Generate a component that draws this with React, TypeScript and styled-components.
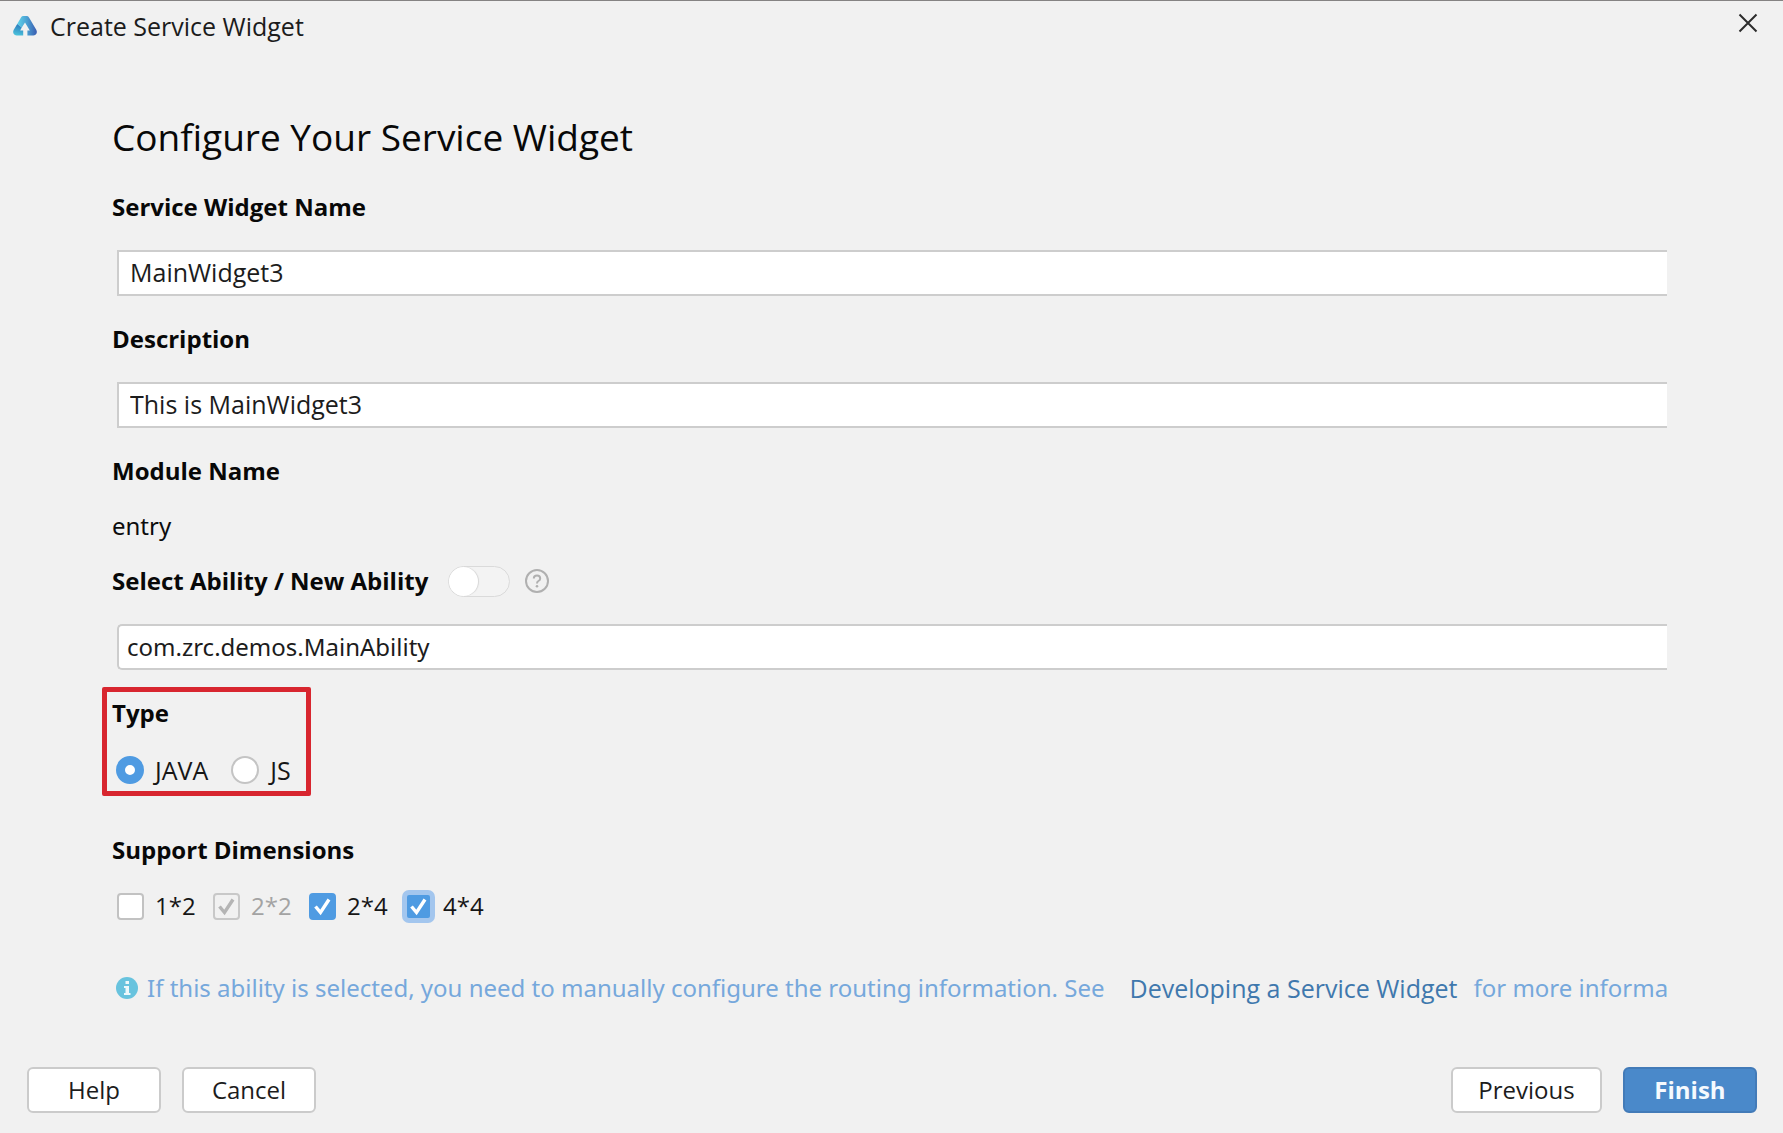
import React, { useState } from "react";
import styled, { createGlobalStyle, css } from "styled-components";

const headingFont = `"Open Sans", "Noto Sans", sans-serif`;
const textFont = `"Noto Sans", "Open Sans", sans-serif`;

const GlobalStyle = createGlobalStyle`
  *, *::before, *::after { box-sizing: border-box; }
  body {
    margin: 0;
    background: #f1f1f1;
    color: #0c0c0c;
    font: 24px/32px ${textFont};
  }
`;

const Dialog = styled.div`
  display: flex;
  flex-direction: column;
  min-height: 100vh;
  border-top: 1px solid #858383;
  overflow: hidden;
`;

const TitleBar = styled.header`
  display: flex;
  align-items: center;
  justify-content: space-between;
  height: 50px;
  padding: 0 24px 0 12px;
`;

const Title = styled.div`
  display: flex;
  align-items: center;
  gap: 12px;
  color: #1c1c1c;
  font: 25px/32px ${headingFont};
`;

const CloseButton = styled.button`
  display: flex;
  padding: 0 0 7px;
  border: 0;
  background: none;
`;

const Form = styled.form`
  display: flex;
  flex: 1;
  flex-direction: column;
  padding: 62px 116px 0 112px;
`;

const Heading = styled.h1`
  margin: 0 0 30px;
  font: 400 37px/48px ${headingFont};
  color: #080808;
`;

const Field = styled.div`
  display: flex;
  flex-direction: column;
  gap: 27px;
  margin-bottom: 27px;
`;

const labelText = css`
  font: 700 24px/32px ${headingFont};
  color: #080808;
`;

const Label = styled.label`
  ${labelText}
`;

const Caption = styled.div`
  ${labelText}
`;

const TextInput = styled.input<{ $rounded?: boolean }>`
  height: 46px;
  margin-left: 5px;
  padding: 0 ${(p) => (p.$rounded ? 8 : 11)}px 2px;
  border: 2px solid #cdcdcd;
  border-right: 0;
  border-radius: ${(p) => (p.$rounded ? "5px 0 0 5px" : "0")};
  background: #fff;
  color: #1c1c1c;
  font: ${(p) => (p.$rounded ? `24px/32px ${textFont}` : `25px/32px ${headingFont}`)};
  outline: none;
`;

const ModuleField = styled.div`
  display: flex;
  flex-direction: column;
  gap: 23px;
  margin-bottom: 23px;
`;

const AbilityRow = styled.div`
  display: flex;
  align-items: center;
`;

const Switch = styled.input`
  appearance: none;
  display: flex;
  width: 62px;
  height: 31px;
  margin: 0 15px 0 20px;
  border: 1px solid #dadada;
  border-radius: 16px;
  background: #f3f3f3;

  &::before {
    content: "";
    width: 29px;
    height: 29px;
    border-radius: 50%;
    background: #fff;
    box-shadow: 1px 0 1px #d6d6d6;
  }
  &:checked { justify-content: flex-end; background: #4e9ade; }
`;

const TypeGroup = styled.div`
  position: relative;
  display: flex;
  flex-direction: column;
  align-self: flex-start;
  gap: 25px;
  margin-bottom: 48px;
`;

const Highlight = styled.div`
  position: absolute;
  inset: -10px -20px -10px -10px;
  border: 5px solid #d8262f;
  border-radius: 2px;
  pointer-events: none;
`;

const RadioRow = styled.div`
  display: flex;
  gap: 23px;
  padding-left: 4px;
  font-size: 25px;
`;

const Choice = styled.label<{ $muted?: boolean }>`
  display: flex;
  align-items: center;
  gap: 11px;
  color: ${(p) => (p.$muted ? "#a3a3a3" : "#161616")};
  font-family: ${headingFont};
`;

const Radio = styled.input`
  appearance: none;
  width: 28px;
  height: 28px;
  margin: 0;
  border: 2px solid #c4c4c4;
  border-radius: 50%;
  background: #fff;

  &:checked { border: 9px solid #4f9be2; }
`;

const DimensionGroup = styled.div`
  display: flex;
  flex-direction: column;
  gap: 24px;
  margin-bottom: 50px;
`;

const DimensionRow = styled.div`
  display: grid;
  grid-template-columns: repeat(4, 96px);
  padding-left: 5px;
`;

const BoxWrap = styled.span`
  display: grid;

  > * { grid-area: 1 / 1; }
  svg { pointer-events: none; }
`;

const Checkbox = styled.input<{ $ring?: boolean }>`
  appearance: none;
  width: 27px;
  height: 27px;
  margin: 0;
  border: 2px solid #c2c2c2;
  border-radius: 4px;
  background: #fff;

  &:checked { border-color: #4f9be2; background: #4f9be2; }
  &&:disabled { border-color: #c8c8c8; background: #f1f1f1; }
  ${(p) =>
    p.$ring &&
    css`
      &:checked { border-color: #a3c6ee; }
      box-shadow: 0 0 0 3px #a3c6ee;
    `}
`;

const Note = styled.p`
  display: flex;
  align-items: center;
  margin: 0 0 0 4px;
  white-space: nowrap;
  color: #76a8dc;

  svg { flex: none; margin-right: 9px; }
`;

const NoteLink = styled.a`
  margin: 0 16px 0 25px;
  color: #3f78ad;
  font: 25px/32px ${headingFont};
  text-decoration: none;
`;

const Footer = styled.footer`
  display: flex;
  gap: 21px;
  padding: 0 26px 20px 27px;
`;

const Spacer = styled.div`
  flex: 1;
`;

const Button = styled.button<{ $primary?: boolean; $wide?: boolean }>`
  width: ${(p) => (p.$wide ? 151 : 134)}px;
  height: 46px;
  padding: 0;
  border: 2px solid ${(p) => (p.$primary ? "#437bb8" : "#cbcbcb")};
  border-radius: 6px;
  background: ${(p) => (p.$primary ? "#4a89ca" : "#fff")};
  color: ${(p) => (p.$primary ? "#f6fafe" : "#1c1c1c")};
  font: ${(p) => (p.$primary ? 700 : 400)} 24px/32px ${headingFont};
`;

const Logo = () => (
  <svg width="26" height="22" viewBox="0 0 26 22" aria-hidden="true">
    <defs>
      <linearGradient id="logoTop" x1="0" y1="0" x2="1" y2="0">
        <stop offset="0" stopColor="#5fd3ea" />
        <stop offset="0.5" stopColor="#4a9fd2" />
        <stop offset="1" stopColor="#3a5cb0" />
      </linearGradient>
      <linearGradient id="logoLeft" x1="0.6" y1="0" x2="0.4" y2="1">
        <stop offset="0" stopColor="#2a78bc" />
        <stop offset="1" stopColor="#4cc4dc" />
      </linearGradient>
    </defs>
    <path d="M9 2.400Q9.800 1 11.400 1h3.200Q16.200 1 17 2.400L24.400 15Q25.400 17 24.400 18.800Q23.400 20.600 21.400 20.600H15.400V15.400H17.800L13 7.600L9.800 12.400L5.200 9Z" fill="url(#logoTop)" />
    <path d="M5.200 9L9.800 12.400L8.200 15.400H11.200V20.600H4.600Q2.600 20.600 1.600 18.800Q.6 17 1.600 15Z" fill="url(#logoLeft)" />
  </svg>
);

const Check = ({ color }: { color: string }) => (
  <svg width="27" height="27" viewBox="0 0 27 27" aria-hidden="true">
    <path d="M6.500 13.500l5 6L20 6.500" fill="none" stroke={color} strokeWidth="3.400" />
  </svg>
);

const dimensions = [
  { name: "1*2" },
  { name: "2*2", on: true, disabled: true },
  { name: "2*4", on: true },
  { name: "4*4", on: true, ring: true },
];

export default function App() {
  const [type, setType] = useState("JAVA");

  return (
    <Dialog>
      <GlobalStyle />
      <TitleBar>
        <Title>
          <Logo />
          Create Service Widget
        </Title>
        <CloseButton aria-label="Close">
          <svg width="22" height="22" viewBox="0 0 22 22" aria-hidden="true">
            <path d="M2.500 2.500l17 17M19.500 2.500l-17 17" stroke="#2c2c2c" strokeWidth="2" />
          </svg>
        </CloseButton>
      </TitleBar>

      <Form>
        <Heading>Configure Your Service Widget</Heading>

        <Field>
          <Label htmlFor="name">Service Widget Name</Label>
          <TextInput id="name" defaultValue="MainWidget3" />
        </Field>
        <Field>
          <Label htmlFor="description">Description</Label>
          <TextInput id="description" defaultValue="This is MainWidget3" />
        </Field>
        <ModuleField>
          <Caption>Module Name</Caption>
          <div>entry</div>
        </ModuleField>
        <Field>
          <AbilityRow>
            <Label htmlFor="ability">Select Ability / New Ability</Label>
            <Switch type="checkbox" role="switch" aria-label="New Ability" />
            <svg width="24" height="24" viewBox="0 0 24 24" fill="none" aria-hidden="true">
              <circle cx="12" cy="12" r="11" stroke="#b0b0b0" strokeWidth="2" />
              <path d="M8.800 9.600Q8.800 6.500 12 6.500T15.200 9.400Q15.200 11 13.400 12Q12 12.800 12 14.400" stroke="#b0b0b0" strokeWidth="2" />
              <circle cx="12" cy="17.200" r="1.300" fill="#b0b0b0" />
            </svg>
          </AbilityRow>
          <TextInput id="ability" $rounded defaultValue="com.zrc.demos.MainAbility" />
        </Field>

        <TypeGroup role="radiogroup" aria-labelledby="type-caption">
          <Highlight />
          <Caption id="type-caption">Type</Caption>
          <RadioRow>
            {["JAVA", "JS"].map((t) => (
              <Choice key={t}>
                <Radio type="radio" name="type" checked={type === t} onChange={() => setType(t)} />
                {t}
              </Choice>
            ))}
          </RadioRow>
        </TypeGroup>

        <DimensionGroup role="group" aria-labelledby="dimension-caption">
          <Caption id="dimension-caption">Support Dimensions</Caption>
          <DimensionRow>
            {dimensions.map((d) => (
              <Choice key={d.name} $muted={d.disabled}>
                <BoxWrap>
                  <Checkbox type="checkbox" defaultChecked={d.on} disabled={d.disabled} $ring={d.ring} />
                  {d.on && <Check color={d.disabled ? "#b4b4b4" : "#fff"} />}
                </BoxWrap>
                {d.name}
              </Choice>
            ))}
          </DimensionRow>
        </DimensionGroup>

        <Note>
          <svg width="22" height="22" viewBox="0 0 22 22" aria-hidden="true">
            <circle cx="11" cy="11" r="11" fill="#68c3de" />
            <path d="M9.500 4h3.500v3H9.500zM8 9h5v7h1.500v2H8v-2h1.500v-5H8z" fill="#eef8fb" />
          </svg>
          <span>If this ability is selected, you need to manually configure the routing information. See</span>
          <NoteLink href="#">Developing a Service Widget</NoteLink>
          <span>for more informa</span>
        </Note>
      </Form>

      <Footer>
        <Button>Help</Button>
        <Button>Cancel</Button>
        <Spacer />
        <Button $wide>Previous</Button>
        <Button $primary>Finish</Button>
      </Footer>
    </Dialog>
  );
}
